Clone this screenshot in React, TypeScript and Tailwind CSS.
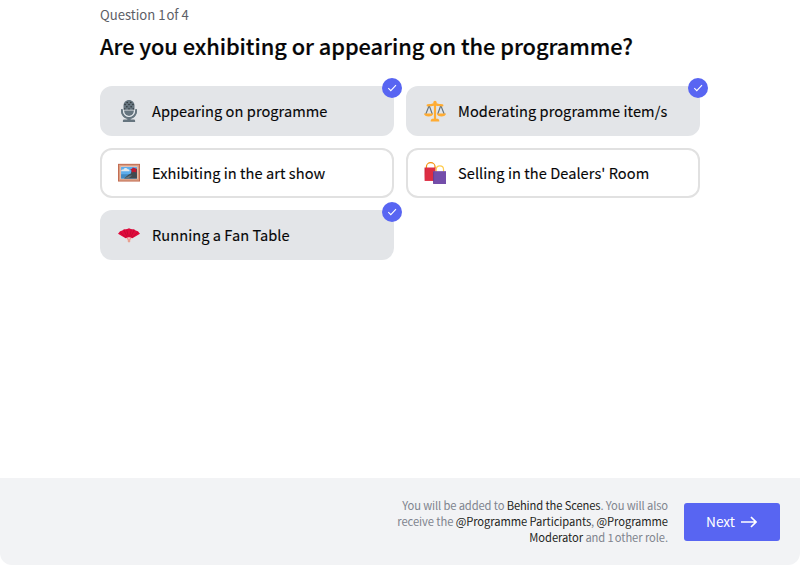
import React from "react";

type IconProps = { className?: string };

function Microphone({ className }: IconProps) {
  const holes = [
    [15, 4], [21, 4], [11.5, 7.5], [18, 7.5], [24.5, 7.5], [14.5, 11], [21.5, 11], [11, 14.5], [18, 14.5], [25, 14.5],
  ];
  return (
    <svg viewBox="0 0 36 36" className={className}>
      <path fill="#66757F" d="M18 0c-5 0-9 4-9 9v7h18V9c0-5-4-9-9-9z" />
      {holes.map(([x, y]) => (
        <circle key={`${x}-${y}`} cx={x} cy={y} r="1.2" fill="#292F33" />
      ))}
      <path fill="#66757F" d="M10 17h16v1a8 8 0 0 1-16 0z" />
      <path fill="#66757F" d="M5 15h2v3a11 11 0 0 0 22 0v-3h2v3c0 6.500-4.600 11.900-10.700 12.800L21 32h5a2 2 0 0 1 2 2v2H8v-2a2 2 0 0 1 2-2h5l.7-1.200C9.600 29.900 5 24.500 5 18z" />
      <path fill="#66757F" d="M5 15h3v3a10 10 0 0 0 20 0v-3h3v3a13 13 0 0 1-26 0z" />
      <path fill="none" stroke="#E1E8ED" strokeWidth="1.200" d="M9 17v1a9 9 0 0 0 18 0v-1" />
    </svg>
  );
}

function Scales({ className }: IconProps) {
  return (
    <svg viewBox="0 0 36 36" className={className}>
      <path fill="none" stroke="#66757F" strokeWidth="1.900" d="M8.500 9 3 23M8.500 9l5 14M27.500 9l-5 14M27.500 9l5.500 14" />
      <path fill="#FFAC33" d="M16.200 5h3.600v28h-3.600z" />
      <circle cx="18" cy="4" r="2.700" fill="#FFAC33" />
      <path fill="#FFAC33" d="M6 7c4 0 6-.5 9-1.500h6c3 1 5 1.500 9 1.500a1.800 1.800 0 0 1 0 3.600c-5 0-8 0-10-1h-4c-2 1-5 1-10 1a1.800 1.800 0 0 1 0-3.600zM0 22h15c0 3-3.500 5-7.500 5S0 25 0 22zM21 22h15c0 3-3.500 5-7.500 5S21 25 21 22zM11 34c0-2.500 1.500-3.500 4-3.500h6c2.500 0 4 1 4 3.500v1H11z" />
    </svg>
  );
}

function FramedPicture({ className }: IconProps) {
  return (
    <svg viewBox="0 0 36 36" className={className}>
      <path fill="#C1694F" d="M0 3h36v29H0z" />
      <path fill="#D99E82" d="M1.500 4.500h33v26h-33z" />
      <path fill="#F4D2C5" d="M4 7h28v21H4z" />
      <path fill="#5DADEC" d="M5 8h26v19H5z" />
      <path fill="#4289C1" d="M5 20h26v7H5z" />
      <path fill="#E1E8ED" d="M5 15c0-2 2-3 3.500-2.500C10 8.500 15 9 16 12c2-.5 3 1 3 3z" />
      <path fill="#414A50" d="m10 27 7-6 4-2 2-7 8-1v16z" />
      <path fill="#66757F" d="m10 27 9-5 4 0-6 5z" />
      <path fill="#BE1931" d="m24 9 3 1 3 1 0 3 0 3-4-1-3 1-1-3-2-2 3-1z" />
    </svg>
  );
}

function ShoppingBags({ className }: IconProps) {
  return (
    <svg viewBox="0 0 36 36" className={className}>
      <path fill="none" stroke="#F4900C" strokeWidth="2" d="M4 10V7.500C4 4 7 1.200 11 1.200S18 4 18 7.500V10" />
      <path fill="#DD2E44" d="M1 9h18v22L1 31z" />
      <path fill="#A0041E" d="m1 9 1.500 2L1 30z" opacity=".35" />
      <path fill="none" stroke="#FFCC4D" strokeWidth="2" d="M20 17v-4.500c0-3.500 2.500-6 6-6s6 2.500 6 6V17" />
      <path fill="#744EAA" d="M15 15h21v21H15z" />
      <path fill="#553788" d="m15 15 1.500 2v17L15 36z" opacity=".6" />
    </svg>
  );
}

function Fan({ className }: IconProps) {
  return (
    <svg viewBox="0 0 36 36" className={className}>
      <path fill="#E00A3C" d="M0 16 3.500 12l3.500-1.500 3-2 4 0L18 7l4 1.500 4 0 3 2 3.500 1.500L36 16 23.500 23.500c-3-2-8-2-11 0z" />
      <path fill="none" stroke="#A0041E" strokeWidth=".6" d="M13 22 3 13M15 21 9.500 9.500M17 20.500 14 8.500M19 20.500 22 8.500M21 21l5.500-11.500M23 22l10-9" />
      <path fill="#F7C9C2" d="M12.500 23.500c3-2 8-2 11 0L19.300 28h-2.600z" />
      <path stroke="#DD2E44" strokeWidth=".7" d="m15 22 3 6 3-6" fill="none" />
      <circle cx="18" cy="28" r="2.200" fill="#E8A08F" />
    </svg>
  );
}

function Option({
  icon,
  label,
  selected,
}: {
  icon: React.ReactNode;
  label: string;
  selected?: boolean;
}) {
  return (
    <button
      className={`relative flex h-[50px] items-center gap-3 rounded-xl border-2 pl-4 text-left ${
        selected ? "border-[#e3e5e8] bg-[#e3e5e8]" : "border-[#e1e1e1] bg-white"
      }`}
    >
      {icon}
      <span className="pb-px text-[14.600px] leading-5 tracking-[0.050px] whitespace-nowrap text-[#060607] [-webkit-text-stroke:0.120px_#060607]">
        {label}
      </span>
      {selected && (
        <span className="absolute -top-[10px] -right-[10px] flex size-5 items-center justify-center rounded-full bg-[#5865f2]">
          <svg viewBox="0 0 20 20" className="size-5">
            <path d="m6.300 10.200 2.500 2.500 5.200-5.500" fill="none" stroke="#fff" strokeWidth="1.100" />
          </svg>
        </span>
      )}
    </button>
  );
}

const iconClass = "size-[22px] shrink-0";

export default function App() {
  return (
    <div className="flex h-[565px] w-[800px] flex-col overflow-hidden bg-white font-['Noto_Sans_CJK_SC','Open_Sans',sans-serif]">
      <main className="mx-auto w-[600px] flex-1">
        <p className="pt-[6px] text-[13.100px] leading-[18px] whitespace-nowrap text-[#5c5e66]">
          <span>Question 1</span>
          <span className="ml-[1px]">of 4</span>
        </p>
        <h1 className="mt-[7px] text-[21.800px] leading-[30px] font-medium tracking-[-0.040px] whitespace-nowrap text-[#060607] [-webkit-text-stroke:0.200px_#060607]">
          Are you exhibiting or appearing on the programme?
        </h1>
        <div className="mt-[25px] grid grid-cols-2 gap-3">
          <Option selected icon={<Microphone className={iconClass} />} label="Appearing on programme" />
          <Option selected icon={<Scales className={iconClass} />} label="Moderating programme item/s" />
          <Option icon={<FramedPicture className={iconClass} />} label="Exhibiting in the art show" />
          <Option icon={<ShoppingBags className={iconClass} />} label="Selling in the Dealers' Room" />
          <Option selected icon={<Fan className={iconClass} />} label="Running a Fan Table" />
        </div>
      </main>
      <footer className="flex h-[87px] items-center justify-end gap-4 rounded-b-[12px] bg-[#f2f3f5] pr-5">
        <p className="pb-[2px] text-right text-[11.200px] leading-4 tracking-[-0.080px] whitespace-nowrap text-[#80848e]">
          <span className="block tracking-[-0.130px]">
            You will be added to <span className="text-[#1e1f22]">Behind the Scenes</span>. You will also
          </span>
          <span className="block">
            receive the <span className="text-[#1e1f22]">@Programme Participants</span>,{" "}
            <span className="text-[#1e1f22]">@Programme</span>
          </span>
          <span className="block">
            <span className="text-[#1e1f22]">Moderator</span> and 1<span className="ml-[1px]">other role.</span>
          </span>
        </p>
        <button className="flex h-[38px] w-24 items-center justify-center gap-[6px] rounded-[3px] bg-[#5865f2] pr-px text-[13.700px] text-white">
          <span>Next</span>
          <svg viewBox="0 0 16 12" className="h-3 w-4" fill="none" stroke="currentColor" strokeWidth="1.700">
            <path d="M0 6h15M10 1l5 5-5 5" />
          </svg>
        </button>
      </footer>
    </div>
  );
}
